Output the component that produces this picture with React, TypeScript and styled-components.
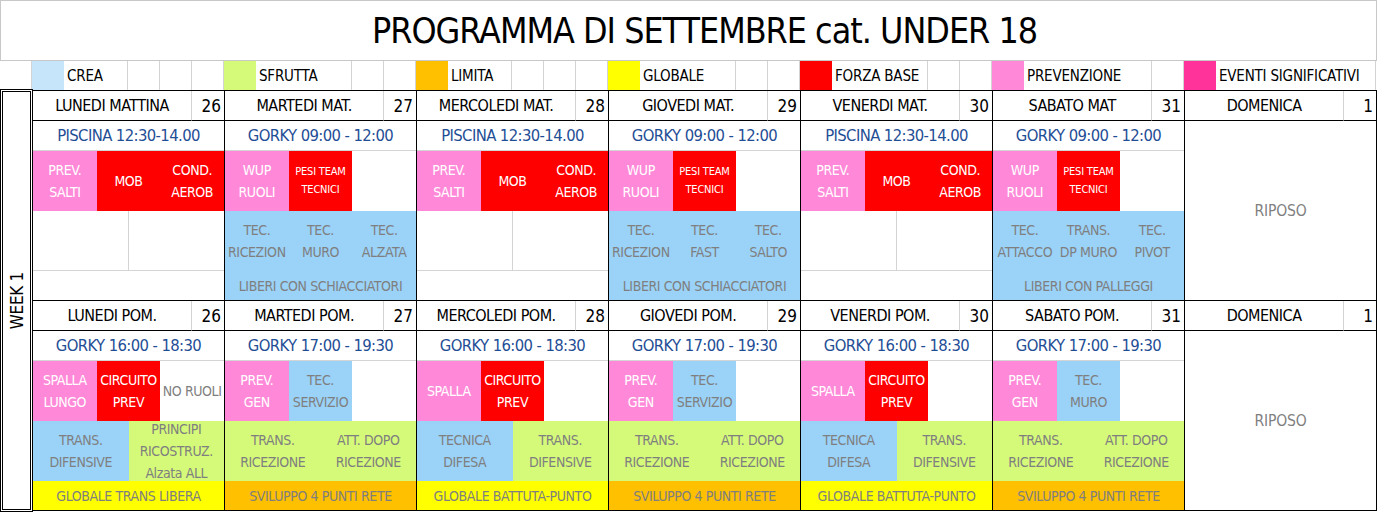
import React from 'react';
import styled, { createGlobalStyle } from 'styled-components';

const FONT = `"Liberation Sans Narrow", "Arial Narrow", "DejaVu Sans Condensed", "Liberation Sans", Arial, sans-serif`;
const GRID = '#d4d4d4';
const GRAY_TEXT = '#7f7f7f';
const LOC_BLUE = '#1f4e96';

const COLORS = {
  pink: '#ff89d8',
  red: '#ff0000',
  blue: '#9ad2f8',
  lightBlue: '#c6e5fa',
  green: '#d5fa7a',
  yellow: '#ffff00',
  orange: '#ffc000',
  hot: '#ff3399',
  white: '#ffffff',
};
type ColorKey = keyof typeof COLORS;

const Global = createGlobalStyle`
  html, body { margin: 0; padding: 0; background: #fff; }
  body { font-family: ${FONT}; color: #000; }
  *, *::before, *::after { box-sizing: border-box; }
`;

const Sheet = styled.div`
  width: 1378px;
  overflow: hidden;
`;

const TitleBar = styled.div`
  height: 61px;
  width: 1377px;
  border: 1px solid #c8c8c8;
  display: flex;
  align-items: center;
  justify-content: center;
  padding-left: 32px;
  font-size: 35.5px;
  letter-spacing: -1px;
  white-space: nowrap;
`;

const Legend = styled.div`
  display: grid;
  grid-template-columns: repeat(43, 32px);
  height: 29px;
`;

const LegendCell = styled.div<{ $span?: number; $bg?: string }>`
  grid-column: span ${(p) => p.$span ?? 1};
  background: ${(p) => p.$bg ?? '#fff'};
  border-right: 1px solid ${(p) => p.$bg ?? GRID};
  font-size: 15px;
  letter-spacing: -0.2px;
  display: flex;
  align-items: center;
  padding-left: 3px;
  white-space: nowrap;
  overflow: hidden;
`;

const Table = styled.div`
  display: flex;
  align-items: flex-start;
`;

const WeekCol = styled.div`
  width: 33px;
  height: 423px;
  margin-top: -1px;
  border: 3px double #000;
  display: flex;
  align-items: center;
  justify-content: center;
`;

const WeekLabel = styled.span`
  writing-mode: vertical-rl;
  transform: rotate(180deg);
  font-size: 17px;
  letter-spacing: -0.3px;
  white-space: nowrap;
`;

const Days = styled.div`
  display: flex;
  flex-direction: column;
`;

const Half = styled.div<{ $last?: boolean }>`
  display: grid;
  grid-template-columns: 191px repeat(5, 192px) 193px;
  border-top: 1px solid #000;
  ${(p) => (p.$last ? 'border-bottom: 1px solid #000;' : '')}
`;

const DayBlock = styled.div<{ $first?: boolean; $last?: boolean }>`
  display: grid;
  grid-template-columns: repeat(6, 1fr);
  grid-template-rows: 30px 30px 60px 60px 29px;
  border-left: ${(p) => (p.$first ? 'none' : '1px solid #000')};
  ${(p) => (p.$last ? 'border-right: 1px solid #000;' : '')}
  min-width: 0;
`;

const DayName = styled.div`
  grid-column: span 5;
  border-bottom: 1px solid #000;
  border-right: 1px solid ${GRID};
  display: flex;
  align-items: center;
  justify-content: center;
  font-size: 16px;
  letter-spacing: -0.5px;
  white-space: nowrap;
`;

const DayNum = styled.div`
  border-bottom: 1px solid #000;
  display: flex;
  align-items: center;
  justify-content: flex-end;
  padding-right: 3px;
  font-size: 17px;
`;

const Location = styled.div`
  grid-column: span 6;
  border-bottom: 1px solid ${GRID};
  color: ${LOC_BLUE};
  font-size: 16.5px;
  letter-spacing: -0.6px;
  display: flex;
  align-items: center;
  justify-content: center;
  white-space: nowrap;
`;

const Cell = styled.div<{
  $span: number;
  $bg: string;
  $light: boolean;
  $small?: boolean;
  $lr?: boolean;
  $lb?: boolean;
}>`
  grid-column: span ${(p) => p.$span};
  background: ${(p) => p.$bg};
  color: ${(p) => (p.$light ? '#fff' : GRAY_TEXT)};
  font-size: ${(p) => (p.$small ? '11px' : '14px')};
  letter-spacing: ${(p) => (p.$small ? '-0.2px' : '-0.4px')};
  line-height: ${(p) => (p.$small ? '18px' : '22px')};
  display: flex;
  align-items: center;
  justify-content: center;
  text-align: center;
  white-space: pre;
  overflow: hidden;
  min-width: 0;
  ${(p) => (p.$lr ? `border-right: 1px solid ${GRID};` : '')}
  ${(p) => (p.$lb ? `border-bottom: 1px solid ${GRID};` : '')}
`;

const Rest = styled.div`
  grid-column: span 6;
  grid-row: span 4;
  color: ${GRAY_TEXT};
  font-size: 15.5px;
  letter-spacing: -0.2px;
  display: flex;
  align-items: center;
  justify-content: center;
`;

type CellDef = { t?: string; bg: ColorKey; span: number; small?: boolean; lr?: boolean; lb?: boolean };
type DayDef = { name: string; num: string; loc?: string; rows?: CellDef[][]; rest?: boolean };

const legendItems: { color: ColorKey; label: string; span: number }[] = [
  { color: 'lightBlue', label: 'CREA', span: 2 },
  { color: 'green', label: 'SFRUTTA', span: 3 },
  { color: 'orange', label: 'LIMITA', span: 2 },
  { color: 'yellow', label: 'GLOBALE', span: 3 },
  { color: 'red', label: 'FORZA BASE', span: 3 },
  { color: 'pink', label: 'PREVENZIONE', span: 4 },
  { color: 'hot', label: 'EVENTI SIGNIFICATIVI', span: 5 },
];

const poolRows: CellDef[][] = [
  [
    { t: 'PREV.\nSALTI', bg: 'pink', span: 2 },
    { t: 'MOB', bg: 'red', span: 2 },
    { t: 'COND.\nAEROB', bg: 'red', span: 2 },
  ],
  [
    { bg: 'white', span: 3, lr: true, lb: true },
    { bg: 'white', span: 3, lb: true },
  ],
  [{ bg: 'white', span: 6 }],
];

const gymRows = (b: string[], c: string): CellDef[][] => [
  [
    { t: 'WUP\nRUOLI', bg: 'pink', span: 2 },
    { t: 'PESI TEAM\nTECNICI', bg: 'red', span: 2, small: true },
    { bg: 'white', span: 2 },
  ],
  b.map((t) => ({ t, bg: 'blue' as ColorKey, span: 2 })),
  [{ t: c, bg: 'blue', span: 6 }],
];

const transRows = (second: string): CellDef[][] => [
  [
    { t: 'PREV.\nGEN', bg: 'pink', span: 2 },
    { t: second, bg: 'blue', span: 2 },
    { bg: 'white', span: 2 },
  ],
  [
    { t: 'TRANS.\nRICEZIONE', bg: 'green', span: 3 },
    { t: 'ATT. DOPO\nRICEZIONE', bg: 'green', span: 3 },
  ],
  [{ t: 'SVILUPPO 4 PUNTI RETE', bg: 'orange', span: 6 }],
];

const spallaRows: CellDef[][] = [
  [
    { t: 'SPALLA', bg: 'pink', span: 2 },
    { t: 'CIRCUITO\nPREV', bg: 'red', span: 2 },
    { bg: 'white', span: 2 },
  ],
  [
    { t: 'TECNICA\nDIFESA', bg: 'blue', span: 3 },
    { t: 'TRANS.\nDIFENSIVE', bg: 'green', span: 3 },
  ],
  [{ t: 'GLOBALE BATTUTA-PUNTO', bg: 'yellow', span: 6 }],
];

const morning: DayDef[] = [
  { name: 'LUNEDI MATTINA', num: '26', loc: 'PISCINA 12:30-14.00', rows: poolRows },
  {
    name: 'MARTEDI MAT.',
    num: '27',
    loc: 'GORKY 09:00 - 12:00',
    rows: gymRows(['TEC.\nRICEZION', 'TEC.\nMURO', 'TEC.\nALZATA'], 'LIBERI CON SCHIACCIATORI'),
  },
  { name: 'MERCOLEDI MAT.', num: '28', loc: 'PISCINA 12:30-14.00', rows: poolRows },
  {
    name: 'GIOVEDI MAT.',
    num: '29',
    loc: 'GORKY 09:00 - 12:00',
    rows: gymRows(['TEC.\nRICEZION', 'TEC.\nFAST', 'TEC.\nSALTO'], 'LIBERI CON SCHIACCIATORI'),
  },
  { name: 'VENERDI MAT.', num: '30', loc: 'PISCINA 12:30-14.00', rows: poolRows },
  {
    name: 'SABATO MAT',
    num: '31',
    loc: 'GORKY 09:00 - 12:00',
    rows: gymRows(['TEC.\nATTACCO', 'TRANS.\nDP MURO', 'TEC.\nPIVOT'], 'LIBERI CON PALLEGGI'),
  },
  { name: 'DOMENICA', num: '1', rest: true },
];

const afternoon: DayDef[] = [
  {
    name: 'LUNEDI POM.',
    num: '26',
    loc: 'GORKY 16:00 - 18:30',
    rows: [
      [
        { t: 'SPALLA\nLUNGO', bg: 'pink', span: 2 },
        { t: 'CIRCUITO\nPREV', bg: 'red', span: 2 },
        { t: 'NO RUOLI', bg: 'white', span: 2 },
      ],
      [
        { t: 'TRANS.\nDIFENSIVE', bg: 'blue', span: 3 },
        { t: 'PRINCIPI\nRICOSTRUZ.\nAlzata ALL', bg: 'green', span: 3 },
      ],
      [{ t: 'GLOBALE TRANS LIBERA', bg: 'yellow', span: 6 }],
    ],
  },
  { name: 'MARTEDI POM.', num: '27', loc: 'GORKY 17:00 - 19:30', rows: transRows('TEC.\nSERVIZIO') },
  { name: 'MERCOLEDI POM.', num: '28', loc: 'GORKY 16:00 - 18:30', rows: spallaRows },
  { name: 'GIOVEDI POM.', num: '29', loc: 'GORKY 17:00 - 19:30', rows: transRows('TEC.\nSERVIZIO') },
  { name: 'VENERDI POM.', num: '30', loc: 'GORKY 16:00 - 18:30', rows: spallaRows },
  { name: 'SABATO POM.', num: '31', loc: 'GORKY 17:00 - 19:30', rows: transRows('TEC.\nMURO') },
  { name: 'DOMENICA', num: '1', rest: true },
];

const Day: React.FC<{ d: DayDef; i: number }> = ({ d, i }) => (
  <DayBlock $first={i === 0} $last={i === 6}>
    <DayName>{d.name}</DayName>
    <DayNum>{d.num}</DayNum>
    {d.rest ? (
      <Rest>RIPOSO</Rest>
    ) : (
      <>
        <Location>{d.loc}</Location>
        {d.rows!.flatMap((row, r) =>
          row.map((c, k) => (
            <Cell
              key={`${r}-${k}`}
              $span={c.span}
              $bg={COLORS[c.bg]}
              $light={c.bg === 'pink' || c.bg === 'red'}
              $small={c.small}
              $lr={c.lr}
              $lb={c.lb}
            >
              {c.t ?? ''}
            </Cell>
          ))
        )}
      </>
    )}
  </DayBlock>
);

export default function App() {
  return (
    <Sheet>
      <Global />
      <TitleBar>PROGRAMMA DI SETTEMBRE cat. UNDER 18</TitleBar>
      <Legend>
        <LegendCell />
        {legendItems.flatMap((it) => {
          const cells = [
            <LegendCell key={it.label + 's'} $bg={COLORS[it.color]} />,
            <LegendCell key={it.label} $span={it.span}>
              {it.label}
            </LegendCell>,
          ];
          for (let k = 0; k < 5 - it.span; k++) cells.push(<LegendCell key={it.label + k} />);
          return cells;
        })}
      </Legend>
      <Table>
        <WeekCol>
          <WeekLabel>WEEK 1</WeekLabel>
        </WeekCol>
        <Days>
          <Half>
            {morning.map((d, i) => (
              <Day key={i} d={d} i={i} />
            ))}
          </Half>
          <Half $last>
            {afternoon.map((d, i) => (
              <Day key={i} d={d} i={i} />
            ))}
          </Half>
        </Days>
      </Table>
    </Sheet>
  );
}
